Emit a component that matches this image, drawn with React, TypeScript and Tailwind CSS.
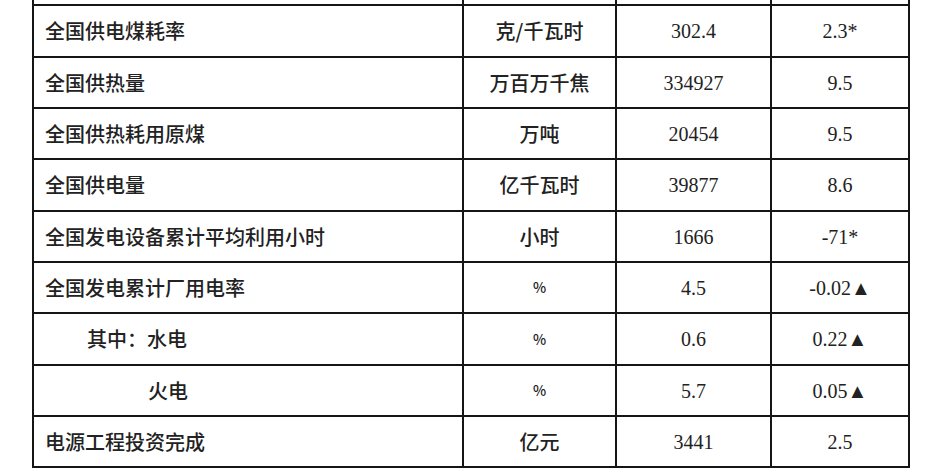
const rows = [
  { name: '全国供电煤耗率', indent: 'pl-[11px]', unit: '克/千瓦时', value: '302.4', change: '2.3*', h: 'h-[52px]' },
  { name: '全国供热量', indent: 'pl-[11px]', unit: '万百万千焦', value: '334927', change: '9.5', h: 'h-[51px]' },
  { name: '全国供热耗用原煤', indent: 'pl-[11px]', unit: '万吨', value: '20454', change: '9.5', h: 'h-[51px]' },
  { name: '全国供电量', indent: 'pl-[11px]', unit: '亿千瓦时', value: '39877', change: '8.6', h: 'h-[52px]' },
  { name: '全国发电设备累计平均利用小时', indent: 'pl-[11px]', unit: '小时', value: '1666', change: '-71*', h: 'h-[51px]' },
  { name: '全国发电累计厂用电率', indent: 'pl-[11px]', unit: '%', value: '4.5', change: '-0.02▲', h: 'h-[51px]' },
  { name: '其中：水电', indent: 'pl-[53px]', unit: '%', value: '0.6', change: '0.22▲', h: 'h-[52px]' },
  { name: '火电', indent: 'pl-[114px]', unit: '%', value: '5.7', change: '0.05▲', h: 'h-[51px]' },
  { name: '电源工程投资完成', indent: 'pl-[11px]', unit: '亿元', value: '3441', change: '2.5', h: 'h-[51px]' },
];

const cjk = "font-['Noto_Sans_CJK_SC','Noto_Sans',sans-serif] font-medium";
const serif = "font-['Liberation_Serif','Noto_Sans_CJK_SC',serif]";

export default function App() {
  return (
    <div className="h-[468px] w-[936px] overflow-hidden bg-white pl-[32px] text-[#222]">
      <div className="w-[878px] border-l-2 border-[#151515]">
        <div className="grid h-[6px] grid-cols-[430px_153px_155px_138px] border-b-2 border-[#151515]">
          <div className="border-r-2 border-[#151515]" />
          <div className="border-r-2 border-[#151515]" />
          <div className="border-r-2 border-[#151515]" />
          <div className="border-r-2 border-[#151515]" />
        </div>
        {rows.map((r) => (
          <div
            key={r.name}
            className={`grid grid-cols-[430px_153px_155px_138px] border-b-2 border-[#151515] ${r.h}`}
          >
            <div className={`flex items-center border-r-2 border-[#151515] text-[20px] ${cjk} ${r.indent}`}>
              {r.name}
            </div>
            <div
              className={`flex items-center justify-center border-r-2 border-[#151515] ${cjk} ${
                r.unit === '%' ? 'text-[14px]' : 'text-[20px]'
              }`}
            >
              {r.unit}
            </div>
            <div className={`flex items-center justify-center border-r-2 border-[#151515] text-[20px] ${serif}`}>
              {r.value}
            </div>
            <div className={`flex items-center justify-center border-r-2 border-[#151515] text-[20px] ${serif}`}>
              {r.change}
            </div>
          </div>
        ))}
      </div>
    </div>
  );
}
